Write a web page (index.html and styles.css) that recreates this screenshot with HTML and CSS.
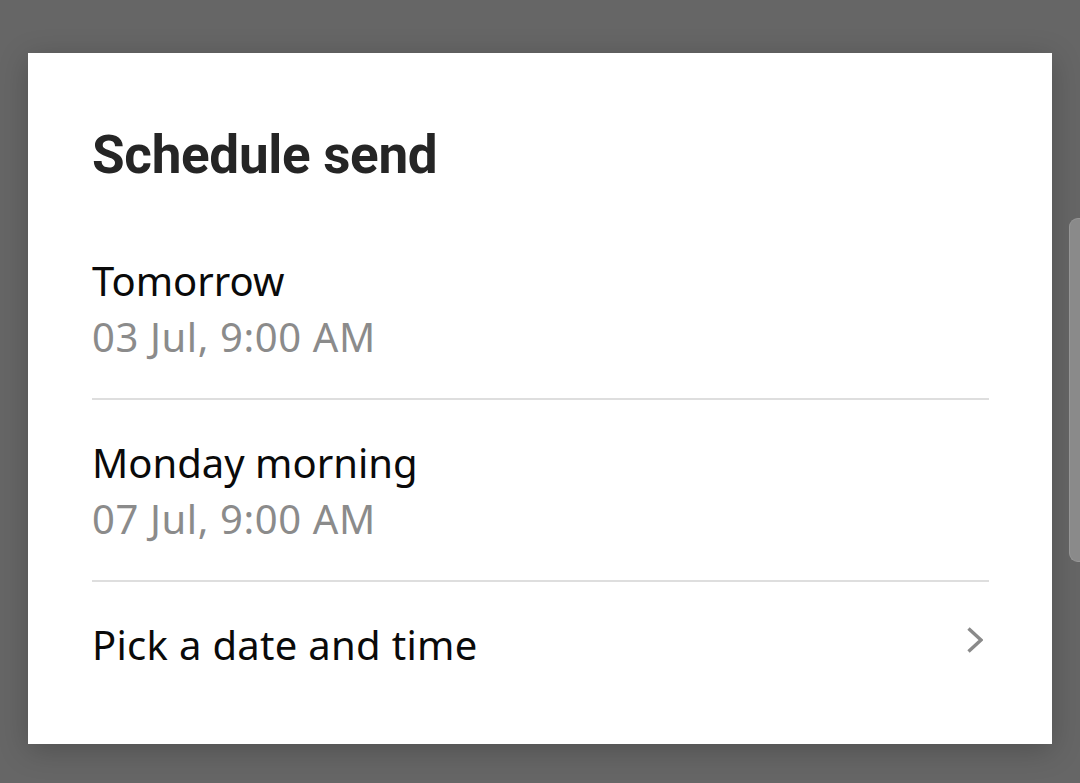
FILE: index.html
```html
<!DOCTYPE html>
<html lang="en">
<head>
  <meta charset="UTF-8">
  <title>Schedule send</title>
  <meta name="viewport" content="width=device-width, initial-scale=1">
  <link rel="stylesheet" href="styles.css">
</head>
<body>

  <div class="dialoog">
    <h1>Schedule send</h1>

    <div class="optie">
      <div class="optie-titel">Tomorrow</div>
      <div class="optie-datum">03 Jul, 9:00 AM</div>
    </div>

    <div class="optie">
      <div class="optie-titel">Monday morning</div>
      <div class="optie-datum">07 Jul, 9:00 AM</div>
    </div>

    <div class="optie optie-kiezen">
      <div class="optie-titel">Pick a date and time</div>
      <svg class="pijl" width="16" height="26" viewBox="0 0 16 26">
        <path d="M1.5 1.5 L14 13 L1.5 24.5" fill="none" stroke="#8a8a8a" stroke-width="3.4"/>
      </svg>
    </div>
  </div>

  <div class="schuifbalk"></div>

</body>
</html>
```

FILE: styles.css
```css
body {
  font-family: "Noto Sans", Arial, sans-serif;
  background: #666666;
  margin: 0;
  padding: 0;
  height: 783px;
  overflow: hidden;
  position: relative;
}
.dialoog {
  width: 1024px;
  height: 691px;
  box-sizing: border-box;
  margin-top: 53px;
  margin-left: 28px;
  padding: 71px 63px 0 64px;
  background: white;
  box-shadow: 0 6px 28px rgba(0,0,0,0.22);
}
h1 {
  font-family: Roboto, "Noto Sans", sans-serif;
  font-weight: bold;
  font-size: 53px;
  line-height: 62px;
  color: #252525;
  margin: 0 0 32px 0;
  letter-spacing: -0.3px;
}
.optie {
  padding: 35px 0 33px 0;
  border-bottom: 2px solid #dedede;
}
.optie-titel {
  font-size: 40px;
  line-height: 56px;
  color: #0a0a0a;
}
.optie-datum {
  font-size: 40px;
  line-height: 56px;
  color: #8b8b8b;
  letter-spacing: 0.6px;
}
.optie-kiezen {
  border-bottom: none;
  display: flex;
  align-items: center;
  justify-content: space-between;
}
.optie-kiezen .optie-titel {
  letter-spacing: 0.3px;
}
.pijl {
  margin-right: 6px;
  margin-bottom: 10px;
}
.schuifbalk {
  position: absolute;
  right: 0;
  top: 218px;
  width: 10px;
  height: 342px;
  background: #8a8a8a;
  border: 1px solid #979797;
  border-right: none;
  border-radius: 9px 0 0 9px;
}
```
